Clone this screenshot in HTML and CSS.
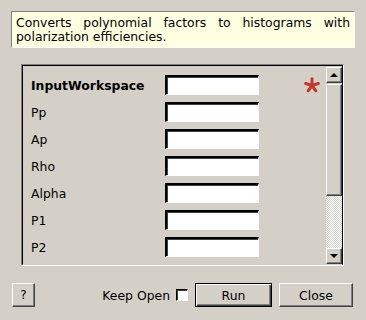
FILE: index.html
```html
<!DOCTYPE html>
<html>
<head>
<meta charset="utf-8">
<link rel="stylesheet" href="styles.css">
</head>
<body>
<div class="dialog">
  <div class="desc">Converts polynomial factors to histograms with polarization efficiencies.</div>
  <div class="frame">
    <div class="rows">
      <div class="row"><span class="label bold">InputWorkspace</span><span class="input"></span>
        <svg class="star" width="16" height="16" viewBox="0 0 16 16"><g stroke="#c0392b" stroke-width="3" stroke-linecap="round"><line x1="8" y1="8.5" x2="8" y2="1.8"/><line x1="8" y1="8.5" x2="14.3" y2="6.5"/><line x1="8" y1="8.5" x2="11.9" y2="13.9"/><line x1="8" y1="8.5" x2="4.1" y2="13.9"/><line x1="8" y1="8.5" x2="1.7" y2="6.5"/></g></svg>
      </div>
      <div class="row"><span class="label">Pp</span><span class="input"></span></div>
      <div class="row"><span class="label">Ap</span><span class="input"></span></div>
      <div class="row"><span class="label">Rho</span><span class="input"></span></div>
      <div class="row"><span class="label">Alpha</span><span class="input"></span></div>
      <div class="row"><span class="label">P1</span><span class="input"></span></div>
      <div class="row"><span class="label">P2</span><span class="input"></span></div>
      <div class="row"><span class="label"></span><span class="input"></span></div>
    </div>
    <div class="scrollbar">
      <div class="sb-btn"><span class="arrow-up"></span></div>
      <div class="sb-thumb"></div>
      <div class="sb-track"></div>
      <div class="sb-btn"><span class="arrow-down"></span></div>
    </div>
  </div>
  <div class="footer">
    <div class="btn help">?</div>
    <div class="spacer"></div>
    <span class="keep">Keep Open</span>
    <span class="check"></span>
    <div class="btn run">Run</div>
    <div class="btn close">Close</div>
  </div>
</div>
</body>
</html>
```
FILE: styles.css
```css
html, body {
  margin: 0;
  padding: 0;
  background: #d4d0c8;
  width: 366px;
  height: 320px;
  overflow: hidden;
  font-family: "DejaVu Sans", sans-serif;
  font-size: 12.4px;
  color: #000;
}
.dialog {
  display: flex;
  flex-direction: column;
}
.desc {
  margin: 11px 11px 0 11px;
  height: 37px;
  box-sizing: border-box;
  background: #ffffe1;
  border: 1px solid;
  border-color: #808080 #ffffff #ffffff #808080;
  padding: 4px 4px 0 4px;
  line-height: 14px;
  text-align: justify;
}
.frame {
  margin: 16px 0 0 21px;
  width: 323px;
  height: 202px;
  box-sizing: border-box;
  border: 1px solid;
  border-color: #808080 #ffffff #ffffff #808080;
  display: flex;
  overflow: hidden;
}
.frame > .rows,
.frame > .scrollbar {
  border-top: 1px solid #000;
}
.frame > .rows {
  border-left: 1px solid #000;
  border-bottom: 1px solid #d4d0c8;
}
.rows {
  flex: 1;
  padding: 9px 0 0 8px;
  display: flex;
  flex-direction: column;
  gap: 7px;
  overflow: hidden;
}
.row {
  display: flex;
  align-items: center;
  height: 20px;
  flex: none;
}
.label {
  width: 134px;
  flex: none;
  padding-top: 1px;
}
.bold { font-weight: bold; }
.input {
  width: 94px;
  height: 20px;
  box-sizing: border-box;
  background: #fff;
  border-style: solid;
  border-width: 2px 1px 1px 2px;
  border-color: #000 #fff #fff #000;
  box-shadow: inset 1px 1px 0 #404040;
  flex: none;
}
.star {
  margin-left: 45px;
  flex: none;
}
.scrollbar {
  width: 16px;
  display: flex;
  flex-direction: column;
  border-right: 1px solid #000;
  border-bottom: 1px solid #d4d0c8;
  padding-top: 1px;
}
.sb-btn, .sb-thumb {
  box-sizing: border-box;
  background: #d4d0c8;
  border: 1px solid;
  border-color: #ffffff #404040 #404040 #ffffff;
  box-shadow: inset -1px -1px 0 #808080;
}
.sb-btn {
  height: 16px;
  display: flex;
  align-items: center;
  justify-content: center;
  flex: none;
}
.sb-thumb {
  height: 112px;
  flex: none;
  margin-top: 1px;
}
.sb-track {
  flex: 1;
  background-color: #d4d0c8;
  background-image: repeating-conic-gradient(#ffffff 0 25%, #d4d0c8 0 50%);
  background-size: 2px 2px;
}
.arrow-up {
  width: 0;
  height: 0;
  border-left: 4px solid transparent;
  border-right: 4px solid transparent;
  border-bottom: 4px solid #000;
}
.arrow-down {
  width: 0;
  height: 0;
  border-left: 4px solid transparent;
  border-right: 4px solid transparent;
  border-top: 4px solid #000;
}
.footer {
  display: flex;
  align-items: center;
  margin: 17px 13px 0 12px;
  height: 24px;
}
.btn {
  box-sizing: border-box;
  height: 24px;
  display: flex;
  align-items: center;
  justify-content: center;
  background: #d4d0c8;
  border: 1px solid;
  border-color: #ffffff #404040 #404040 #ffffff;
  box-shadow: inset -1px -1px 0 #808080;
}
.help {
  width: 23px;
  font-size: 12px;
}
.spacer { flex: 1; }
.keep { margin-right: 6px; }
.check {
  width: 12px;
  height: 12px;
  box-sizing: border-box;
  background: #fff;
  border: 1px solid;
  border-color: #000 #fff #fff #000;
  box-shadow: inset 1px 1px 0 #404040;
}
.run {
  margin-left: 7px;
  width: 77px;
  border: 1px solid #000;
  box-shadow: inset 1px 1px 0 #ffffff, inset -1px -1px 0 #404040, inset -2px -2px 0 #808080;
}
.close {
  margin-left: 7px;
  width: 74px;
}
```
